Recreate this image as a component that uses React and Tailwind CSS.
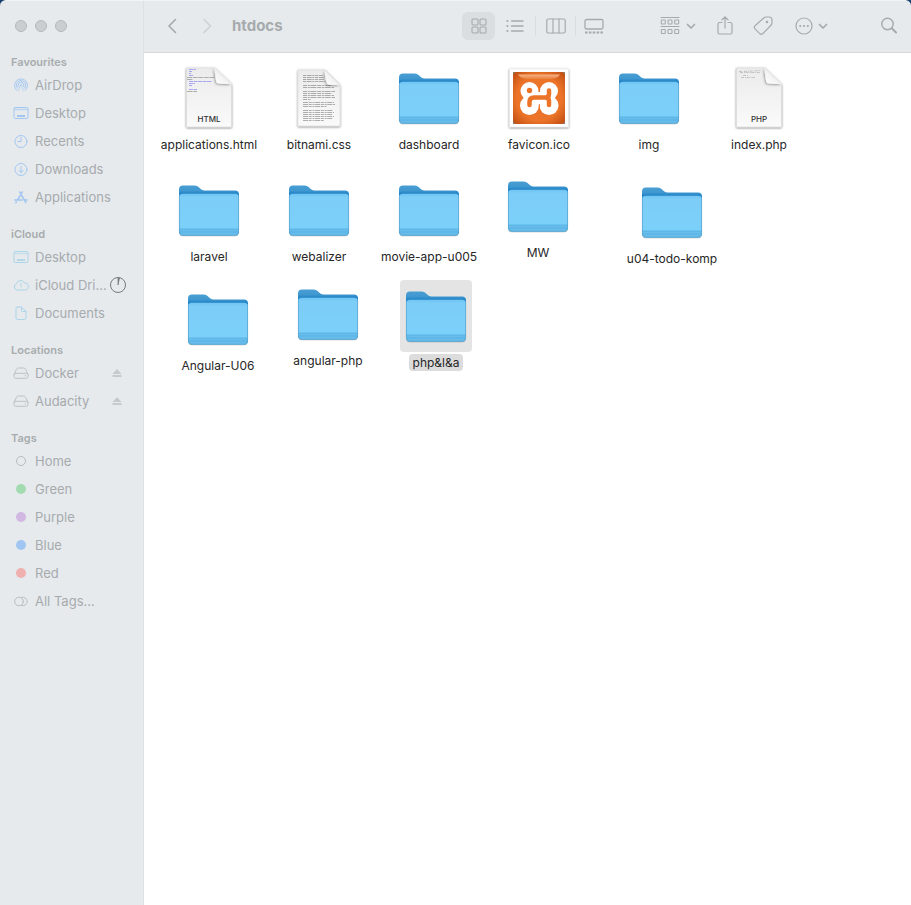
import React from "react";

function Folder() {
  return (
    <svg viewBox="0 0 64 64" className="size-16" aria-hidden="true">
      <defs>
        <linearGradient id="folderBack" x1="0" y1="0" x2="0" y2="1">
          <stop offset="0" stopColor="#4a9fd3" />
          <stop offset="0.1" stopColor="#3f98d0" />
          <stop offset="0.17" stopColor="#2182c6" />
        </linearGradient>
        <linearGradient id="folderFront" x1="0" y1="0" x2="0" y2="1">
          <stop offset="0" stopColor="#70c4f2" />
          <stop offset="0.08" stopColor="#7ccdf8" />
          <stop offset="1" stopColor="#7bd1fa" />
        </linearGradient>
      </defs>
      <rect x="2.500" y="52" width="59" height="6.300" rx="3" fill="#000" opacity=".3" />
      <path d="M2 11.500Q2 7.500 6 7.500H17.500C22 7.500 23.500 12.500 27.500 12.500H58Q62 12.500 62 16.500V53Q62 57 58 57H6Q2 57 2 53Z" fill="url(#folderBack)" />
      <path d="M2 19.500Q2 15.800 6 15.800H58Q62 15.800 62 19.500V53Q62 57.500 58 57.500H6Q2 57.500 2 53Z" fill="url(#folderFront)" />
      <path d="M2 51H62V53Q62 57.500 58 57.500H6Q2 57.500 2 53Z" fill="#68bdec" />
      <path d="M2 51H62M2 54H62" stroke="#52aee0" strokeWidth=".7" />
      <path d="M2.400 18V53Q2.400 57.200 6 57.200H58Q61.600 57.200 61.600 53V18" fill="none" stroke="#559fca" strokeWidth=".7" />
    </svg>
  );
}

function Sheet({ kind }) {
  return (
    <svg viewBox="0 0 64 64" className="size-16" aria-hidden="true">
      <defs>
        <linearGradient id="paper" x1="0" y1="0" x2="0" y2="1">
          <stop offset="0" stopColor="#ebebeb" />
          <stop offset="1" stopColor="#fafafa" />
        </linearGradient>
        <linearGradient id="curl" x1="0" y1="1" x2="1" y2="0">
          <stop offset="0" stopColor="#ffffff" />
          <stop offset=".4" stopColor="#f4f4f4" />
          <stop offset="1" stopColor="#cfcfcf" />
        </linearGradient>
        <filter id="sheetShadow" x="-20%" y="-20%" width="140%" height="140%">
          <feDropShadow dx="0" dy=".8" stdDeviation=".8" floodOpacity=".5" />
        </filter>
        <filter id="curlShadow" x="-40%" y="-40%" width="180%" height="180%">
          <feDropShadow dx="-1" dy="1" stdDeviation="1.300" floodOpacity=".35" />
        </filter>
      </defs>
      {kind === "CSS" ? (
        <>
          <path d="M11 4H38L53 19V60H11Z" fill="url(#paper)" stroke="#d8d8d8" strokeWidth=".6" filter="url(#sheetShadow)" />
          <g stroke="#555" strokeWidth=".9" opacity=".5">
            <path d="M16 9.500H36M16 11.500H37M16 13.500H37M16 15.500H38" strokeDasharray="3 .7 5 .6 2 .8" />
            <path d="M16 19.500H45M16 21.500H47M16 25.500H48M16 27.500H45M16 29.500H47M16 31.500H48M16 33.500H24" strokeDasharray="4 .8 2 .6 6 .9" />
            <path d="M16 36.500H47M16 38.500H48M16 40.500H40M16 44.500H46M16 46.500H47M16 48.500H45M16 50.500H47M16 52.500H46M16 54.500H37" strokeDasharray="5 .7 3 .8 2 .6" />
          </g>
          <path d="M37.500 4Q38.500 17 41 18.500Q44 19 53 19Z" fill="url(#curl)" filter="url(#curlShadow)" />
        </>
      ) : (
        <>
          <path d="M9.500 2H38L54.500 18V61H9.500Z" fill="url(#paper)" stroke="#d8d8d8" strokeWidth=".6" filter="url(#sheetShadow)" />
          {kind === "HTML" ? (
            <g strokeWidth=".9" opacity=".7">
              <path d="M12 3.500H19M12 5.500H15M12 7.500H14M12 9.500H16M12 15.500H35M12 17.500H18M12 19.500H15M12 23.500H20" stroke="#7c7cf2" strokeDasharray="4 .5" />
              <path d="M10 11.500H38M10 13.500H16M10 25.500H20" stroke="#888" strokeDasharray="5 .6" />
            </g>
          ) : (
            <g stroke="#999" strokeWidth=".7" opacity=".7">
              <path d="M12 5.500H15M17 5.500L34 4.500M13 6.500H33M16 9.500H21M14 11.500H28" strokeDasharray="3 1 1 .6" />
            </g>
          )}
          <path d="M37.500 2Q38.500 15.500 40 17Q43 18 54.500 18Z" fill="url(#curl)" filter="url(#curlShadow)" />
          <text x="32" y="56" textAnchor="middle" fontSize="8" fontWeight="500" fill="#333" fontFamily="Inter, sans-serif">{kind}</text>
        </>
      )}
    </svg>
  );
}

function Favicon() {
  return (
    <svg viewBox="0 0 64 64" className="size-16" aria-hidden="true">
      <defs>
        <linearGradient id="gloss" x1="0" y1="0" x2="0" y2="1">
          <stop offset="0" stopColor="#f6b487" />
          <stop offset="1" stopColor="#e9803d" />
        </linearGradient>
        <radialGradient id="orange" cx=".5" cy=".5" r=".72">
          <stop offset=".6" stopColor="#ec7429" />
          <stop offset="1" stopColor="#b9480f" />
        </radialGradient>
        <filter id="cardShadow" x="-10%" y="-10%" width="120%" height="120%">
          <feDropShadow dx="0" dy=".8" stdDeviation=".8" floodOpacity=".5" />
        </filter>
      </defs>
      <rect x="2.500" y="3" width="59" height="58" fill="#fff" stroke="#e2e2e2" strokeWidth=".5" filter="url(#cardShadow)" />
      <rect x="6" y="6" width="52" height="52" fill="#87827b" />
      <rect x="6" y="6" width="52" height="52" rx="4" fill="url(#orange)" />
      <path d="M11 8.500H53Q51 12.500 43 13H21Q13 12.500 11 8.500Z" fill="url(#gloss)" />
      <g fill="#fff">
        <circle cx="22.500" cy="25" r="9" />
        <circle cx="42" cy="25" r="9" />
        <circle cx="22.500" cy="39.500" r="9.500" />
        <circle cx="42" cy="39.500" r="9.500" />
        <rect x="17" y="26" width="30" height="13" />
      </g>
      <circle cx="22.500" cy="24.500" r="2.700" fill="#ec7429" />
      <path d="M22.500 39V36Q22.500 31.500 27 31.500H38Q42 31.500 42 28V24.500M38 31.500Q42 31.500 42 35V39" fill="none" stroke="#ec7429" strokeWidth="4.500" strokeLinecap="round" />
      <path d="M32.300 38V48" stroke="#ec7429" strokeWidth="1" />
    </svg>
  );
}

const files = [
  { name: "applications.html", x: 65, y: 9, icon: "HTML" },
  { name: "bitnami.css", x: 175, y: 9, icon: "CSS" },
  { name: "dashboard", x: 285, y: 9 },
  { name: "favicon.ico", x: 395, y: 9, icon: "ICO" },
  { name: "img", x: 505, y: 9 },
  { name: "index.php", x: 615, y: 9, icon: "PHP" },
  { name: "laravel", x: 65, y: 121 },
  { name: "webalizer", x: 175, y: 121 },
  { name: "movie-app-u005", x: 285, y: 121 },
  { name: "MW", x: 394, y: 117 },
  { name: "u04-todo-komp", x: 528, y: 123 },
  { name: "Angular-U06", x: 74, y: 230 },
  { name: "angular-php", x: 184, y: 225 },
  { name: "php&l&a", x: 292, y: 227, selected: true },
];

function FileItem({ file }) {
  return (
    <button
      type="button"
      aria-pressed={!!file.selected}
      className="absolute flex w-28 -translate-x-1/2 flex-col items-center gap-0.5"
      style={{ left: file.x, top: file.y }}
    >
      <span className={`rounded p-1 ${file.selected ? "bg-[#e4e4e4]" : ""}`}>
        {!file.icon ? <Folder /> : file.icon === "ICO" ? <Favicon /> : <Sheet kind={file.icon} />}
      </span>
      <span className={`rounded-sm px-1 text-xs leading-[17px] whitespace-nowrap text-[#262626] ${file.selected ? "bg-[#dcdcdc]" : ""}`}>
        {file.name}
      </span>
    </button>
  );
}

function Icon({ size = "size-4", box = 16, width = 1, children }) {
  return (
    <svg viewBox={`0 0 ${box} ${box}`} className={`${size} shrink-0`} fill="none" stroke="currentColor" strokeWidth={width} strokeLinecap="round" strokeLinejoin="round" aria-hidden="true">
      {children}
    </svg>
  );
}

const glyphs = {
  airdrop: (
    <>
      <path d="M3.800 13.400A6.500 6.500 0 1 1 12.200 13.400M4.800 11.500A4.600 4.600 0 1 1 11.200 11.500M6.100 10.100A2.800 2.800 0 1 1 9.900 10.100" />
      <path d="M5.500 14.300L7.200 10M10.500 14.300L8.800 10" strokeWidth=".5" />
      <circle cx="8" cy="8.300" r="1" fill="currentColor" stroke="none" />
    </>
  ),
  desktop: (
    <>
      <rect x="1" y="2.500" width="14" height="11" rx="1.300" />
      <path d="M1.500 4.500H14.500" strokeWidth="1.500" opacity=".6" />
      <path d="M4 11H12" strokeWidth="1.800" strokeLinecap="butt" />
    </>
  ),
  clock: (
    <>
      <circle cx="8" cy="8.500" r="6" />
      <path d="M8 4.500V8.500H5" />
    </>
  ),
  download: (
    <>
      <circle cx="8" cy="8.500" r="6" />
      <path d="M8 5.500V11.500M5.800 9.300L8 11.500L10.200 9.300" />
    </>
  ),
  apps: (
    <path d="M9.300 3L4.500 11M6.700 3L12.800 13.500M1.800 11H9.200M12 11H14.200M3.300 13L2.800 13.800" strokeWidth="1.500" />
  ),
  cloud: (
    <>
      <path d="M4 13A3.300 3.300 0 0 1 3.400 6.700A4.300 4.300 0 0 1 11.400 5.900A3.500 3.500 0 0 1 12.300 13Z" />
      <path d="M8 6.500V9.200M8 10.900V11" />
    </>
  ),
  document: (
    <>
      <path d="M4.500 2H8.500L13 6.500V13Q13 14.500 11.500 14.500H4.500Q3 14.500 3 13V3.500Q3 2 4.500 2Z" />
      <path d="M8.500 2V5.500Q8.500 6.500 9.500 6.500H13" />
    </>
  ),
  drive: (
    <>
      <path d="M1 9.500L3.500 4.200Q4 3 5.200 3H10.800Q12 3 12.500 4.200L15 9.500" />
      <rect x="1" y="8.300" width="14" height="5" rx="1.800" />
      <path d="M12 10.800H12.600" />
    </>
  ),
  tags: (
    <>
      <circle cx="6" cy="8.500" r="4.300" />
      <path d="M8.600 4.400A4.300 4.300 0 1 1 8.600 12.600" />
    </>
  ),
};

const sections = [
  {
    title: "Favourites",
    tint: "text-[#a2c6f0]",
    items: [
      { name: "AirDrop", icon: "airdrop" },
      { name: "Desktop", icon: "desktop" },
      { name: "Recents", icon: "clock" },
      { name: "Downloads", icon: "download" },
      { name: "Applications", icon: "apps" },
    ],
  },
  {
    title: "iCloud",
    tint: "text-[#abd5e8]",
    items: [
      { name: "Desktop", icon: "desktop" },
      { name: "iCloud Dri…", icon: "cloud", progress: true },
      { name: "Documents", icon: "document" },
    ],
  },
  {
    title: "Locations",
    tint: "text-[#bec2c4]",
    items: [
      { name: "Docker", icon: "drive", eject: true },
      { name: "Audacity", icon: "drive", eject: true },
    ],
  },
  {
    title: "Tags",
    tint: "text-[#b9bdc0]",
    items: [
      { name: "Home", dot: "border border-[#b9bdbf]" },
      { name: "Green", dot: "bg-[#a2dbb0]" },
      { name: "Purple", dot: "bg-[#d0b8e2]" },
      { name: "Blue", dot: "bg-[#a0c6f1]" },
      { name: "Red", dot: "bg-[#f0b0b0]" },
      { name: "All Tags…", icon: "tags" },
    ],
  },
];

function Sidebar() {
  return (
    <aside className="w-36 shrink-0 border-r border-[#dde1e4]">
      <div className="flex h-[52px] items-center gap-2 pb-0.5 pl-[15px]">
        {["Close", "Minimise", "Zoom"].map((label) => (
          <button key={label} type="button" aria-label={label} className="size-3 rounded-full border border-[#b5b9bb] bg-[#cacecf]" />
        ))}
      </div>
      <nav className="flex flex-col gap-3.5">
        {sections.map((section) => (
          <section key={section.title}>
            <h2 className="pl-[11px] text-[11px] leading-[18px] font-semibold text-[#a8acae]">{section.title}</h2>
            <ul>
              {section.items.map((item) => (
                <li key={item.name} className="flex h-7 items-center pr-[17px] pl-[13px]">
                  <a href="#" className="flex min-w-0 flex-1 items-center gap-1.5">
                    <span className={`flex w-4 justify-center ${section.tint}`}>
                      {item.icon ? <Icon>{glyphs[item.icon]}</Icon> : <span className={`size-2.5 rounded-full ${item.dot}`} />}
                    </span>
                    <span className="text-[13px] leading-4 whitespace-nowrap text-[#a7abad]">{item.name}</span>
                  </a>
                  {item.progress && (
                    <svg viewBox="0 0 16 16" className="size-4 shrink-0" role="img" aria-label="Syncing">
                      <circle cx="8" cy="8" r="7.500" fill="none" stroke="#777a7c" />
                      <path d="M8 8V1H9.500Z" fill="#777a7c" stroke="#777a7c" strokeWidth=".7" />
                    </svg>
                  )}
                  {item.eject && (
                    <button type="button" aria-label={`Eject ${item.name}`} className="flex w-[18px] justify-center text-[#c6cacc]">
                      <svg viewBox="0 0 10 10" className="size-2.5" fill="currentColor" aria-hidden="true">
                        <path d="M5 1L9.500 6H.5ZM.5 7H9.500V9H.5Z" />
                      </svg>
                    </button>
                  )}
                </li>
              ))}
            </ul>
          </section>
        ))}
      </nav>
    </aside>
  );
}

function Chevron() {
  return (
    <Icon size="size-2.5" box={10} width={1.7}>
      <path d="M1.500 3.500L5 7L8.500 3.500" />
    </Icon>
  );
}

function Toolbar() {
  return (
    <header className="flex h-[52px] items-center border-b border-[#d8d8d9] pr-3 pb-px pl-[18px] text-[#a6aaac]">
      <button type="button" aria-label="Back">
        <Icon size="size-5" box={20} width={1.6}><path d="M13.500 3.500L7 10L13.500 16.500" /></Icon>
      </button>
      <button type="button" aria-label="Forward" className="ml-4 text-[#cdd1d3]">
        <Icon size="size-5" box={20} width={1.6}><path d="M6 3.500L12.500 10L6 16.500" /></Icon>
      </button>
      <h1 className="ml-[14px] text-[15px] leading-5 font-bold">htdocs</h1>
      <div className="ml-auto flex items-center">
        <button type="button" aria-label="Icons" aria-pressed="true" className="flex h-7 w-[33px] items-center justify-center rounded-md bg-[#dadee0]">
          <Icon box={16} width={1.1}>
            <rect x="1" y="1" width="6" height="6" rx="1" /><rect x="9" y="1" width="6" height="6" rx="1" />
            <rect x="1" y="9" width="6" height="6" rx="1" /><rect x="9" y="9" width="6" height="6" rx="1" />
          </Icon>
        </button>
        <button type="button" aria-label="List" className="flex h-7 w-10 items-center justify-center">
          <Icon size="size-5" box={20} width={1.4}>
            <path d="M6.500 5H18M6.500 10H18M6.500 15H18" />
            <path d="M2.300 5H2.500M2.300 10H2.500M2.300 15H2.500" strokeWidth="2" />
          </Icon>
        </button>
        <span className="h-5 w-px bg-[#d9dddf]" />
        <button type="button" aria-label="Columns" className="flex h-7 w-[39px] items-center justify-center">
          <Icon size="size-5" box={20} width={1.2}>
            <rect x=".8" y="3" width="18.400" height="14" rx="1.500" />
            <path d="M7 3V17M13 3V17" />
          </Icon>
        </button>
        <span className="h-5 w-px bg-[#d9dddf]" />
        <button type="button" aria-label="Gallery" className="flex h-7 w-9 items-center justify-center">
          <Icon size="size-5" box={20} width={1.3}>
            <rect x="1" y="3.500" width="18" height="9.500" rx="1.500" />
            <path d="M1 16.500H19" strokeWidth="2.200" strokeDasharray="2.600 1.250" strokeLinecap="butt" />
          </Icon>
        </button>
      </div>
      <div className="ml-12 flex items-center">
        <button type="button" aria-label="Group items" className="flex items-center gap-1.5">
          <Icon size="size-5" box={20} width={1.1}>
            <path d="M1 1.500H19M1 10.500H19" />
            <rect x="1.300" y="4" width="4" height="4" rx=".8" /><rect x="8" y="4" width="4" height="4" rx=".8" /><rect x="14.700" y="4" width="4" height="4" rx=".8" />
            <rect x="1.300" y="13.500" width="4" height="4" rx=".8" /><rect x="8" y="13.500" width="4" height="4" rx=".8" /><rect x="14.700" y="13.500" width="4" height="4" rx=".8" />
          </Icon>
          <Chevron />
        </button>
        <button type="button" aria-label="Share" className="ml-[19px]">
          <Icon size="size-5" box={20} width={1.2}>
            <path d="M7 6.500H4.500Q3 6.500 3 8V16.500Q3 18 4.500 18H15.500Q17 18 17 16.500V8Q17 6.500 15.500 6.500H13M10 12V1M7 3.800L10 1L13 3.800" />
          </Icon>
        </button>
        <button type="button" aria-label="Edit tags" className="ml-[18px]">
          <Icon size="size-5" box={20} width={1.2}>
            <path d="M11 1.800Q11.800 1 13 1H16Q19 1 19 4V7Q19 8.200 18.200 9L9.600 17.800Q8.300 19 7 17.800L1.800 12.600Q.8 11.300 1.800 10Z" />
            <circle cx="14" cy="6" r=".7" fill="currentColor" />
          </Icon>
        </button>
        <button type="button" aria-label="Actions" className="ml-[21px] flex items-center gap-1">
          <Icon size="size-5" box={20} width={1.2}>
            <circle cx="10" cy="10" r="8" />
            <path d="M6.200 10H6.300M10 10H10.100M13.800 10H13.900" strokeWidth="2" />
          </Icon>
          <Chevron />
        </button>
        <button type="button" aria-label="Search" className="ml-[51px]">
          <Icon size="size-5" box={20} width={1.4}>
            <circle cx="8.500" cy="8" r="5.700" />
            <path d="M12.800 12.300L17 16.500" strokeWidth="2" />
          </Icon>
        </button>
      </div>
    </header>
  );
}

export default function App() {
  return (
    <div className="min-h-screen bg-[#174171] font-['Inter','Liberation_Sans',sans-serif]">
      <div className="flex min-h-screen overflow-hidden rounded-t-md border-t border-[#f1f4f5] bg-[#e6eaed]">
        <Sidebar />
        <div className="flex min-w-0 flex-1 flex-col">
          <Toolbar />
          <main className="relative min-h-96 flex-1 bg-white">
            {files.map((file) => (
              <FileItem key={file.name} file={file} />
            ))}
          </main>
        </div>
      </div>
    </div>
  );
}
